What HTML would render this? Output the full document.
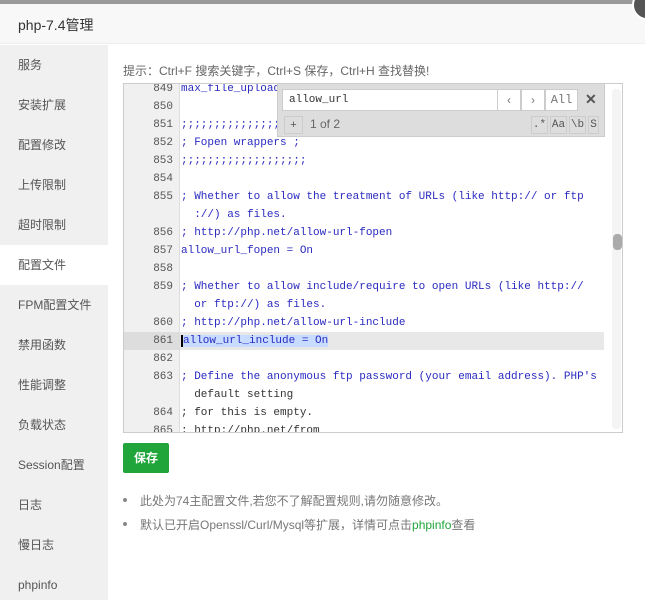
<!DOCTYPE html>
<html><head><meta charset="utf-8"><style>
*{margin:0;padding:0;box-sizing:border-box}
body{width:645px;height:600px;overflow:hidden;background:#fff;font-family:"Liberation Sans","Noto Sans CJK SC",sans-serif;position:relative}
.top{position:absolute;left:0;top:0;width:645px;height:4px;background:#9a9a9a}
.hdr{position:absolute;left:0;top:4px;width:645px;height:40px;background:#f8f8f8;border-bottom:1px solid #eee;font-size:14px;color:#333;padding:11px 0 0 18px}
.close{position:absolute;left:632px;top:-10px;width:30px;height:30px;border-radius:50%;background:#555;border:2px solid #fff}
.side{position:absolute;left:0;top:45px;width:108px;height:555px;background:#f0f0f0}
.side div{height:40px;line-height:40px;padding-left:18px;font-size:12px;color:#555}
.side .on{background:#fff}
.tip{position:absolute;left:123px;top:62px;font-size:12px;color:#666}
.ed{position:absolute;left:123px;top:83px;width:500px;height:350px;border:1px solid #ccc;overflow:hidden;background:#fff}
.gut{position:absolute;left:0;top:0;width:56px;height:100%;background:#f0f0f0;border-right:1px solid #ddd}
.lines{position:absolute;left:0;top:-4px;width:480px;font-family:"Liberation Mono",monospace;font-size:11px;line-height:18px}
.l{position:relative;height:18px;white-space:pre;color:#2a2ac0;padding-left:57px}
.l .n{position:absolute;left:0;width:49px;text-align:right;color:#555}
.l.c{color:#333}
.sel{background:#e8e8e8}
.sel .n{background:#ddd;width:56px;padding-right:7px}
.hl{background:#c8dcff;border-left:2px solid #000}
.sb{position:absolute;left:612px;top:89px;width:9px;height:340px;background:#f4f4f4;border-radius:4px}
.th{position:absolute;left:613px;top:234px;width:9px;height:16px;background:#aaa;border-radius:4px}
.sp{position:absolute;left:277px;top:84px;width:328px;height:53px;background:#ddd;border:1px solid #ccc;border-top:none}
.inp{position:absolute;left:4px;top:5px;width:245px;height:22px;background:#fff;border:1px solid #ccc;font-family:"Liberation Mono",monospace;font-size:11px;padding:4px 6px;color:#333}
.bt{position:absolute;top:5px;height:22px;background:#fff;border:1px solid #ccc;font-size:12px;color:#777;text-align:center;line-height:20px}
.sm{position:absolute;top:32px;height:18px;border:1px solid #ccc;font-size:11px;color:#555;text-align:center;line-height:16px;font-family:"Liberation Mono",monospace}
.save{position:absolute;left:123px;top:443px;width:46px;height:30px;background:#20a53a;border-radius:2px;color:#fff;font-size:12px;font-weight:bold;text-align:center;line-height:30px}
.ul{position:absolute;left:123px;top:492px;font-size:12px;color:#777}
.ul div{height:24px;position:relative;padding-left:17px}
.ul div:before{content:"";position:absolute;left:0;top:6px;width:4px;height:4px;border-radius:50%;background:#888}
</style></head><body>
<div class="top"></div>
<div class="hdr">php-7.4管理</div>
<div class="close"></div>
<div class="side">
<div>服务</div><div>安装扩展</div><div>配置修改</div><div>上传限制</div><div>超时限制</div><div class="on">配置文件</div><div>FPM配置文件</div><div>禁用函数</div><div>性能调整</div><div>负载状态</div><div>Session配置</div><div>日志</div><div>慢日志</div><div>phpinfo</div>
</div>
<div class="tip">提示：Ctrl+F 搜索关键字，Ctrl+S 保存，Ctrl+H 查找替换!</div>
<div class="ed">
<div class="gut"></div>
<div class="lines">
<div class="l"><span class="n">849</span>max_file_uploads = 20</div>
<div class="l"><span class="n">850</span></div>
<div class="l"><span class="n">851</span>;;;;;;;;;;;;;;;;;;;</div>
<div class="l"><span class="n">852</span>; Fopen wrappers ;</div>
<div class="l"><span class="n">853</span>;;;;;;;;;;;;;;;;;;;</div>
<div class="l"><span class="n">854</span></div>
<div class="l"><span class="n">855</span>; Whether to allow the treatment of URLs (like http:// or ftp</div>
<div class="l"><span class="n"></span>  ://) as files.</div>
<div class="l"><span class="n">856</span>; http://php.net/allow-url-fopen</div>
<div class="l"><span class="n">857</span>allow_url_fopen = On</div>
<div class="l"><span class="n">858</span></div>
<div class="l"><span class="n">859</span>; Whether to allow include/require to open URLs (like http://</div>
<div class="l"><span class="n"></span>  or ftp://) as files.</div>
<div class="l"><span class="n">860</span>; http://php.net/allow-url-include</div>
<div class="l sel"><span class="n">861</span><span class="hl">allow_url_include = On</span></div>
<div class="l"><span class="n">862</span></div>
<div class="l"><span class="n">863</span>; Define the anonymous ftp password (your email address). PHP's</div>
<div class="l c"><span class="n"></span>  default setting</div>
<div class="l c"><span class="n">864</span>; for this is empty.</div>
<div class="l c"><span class="n">865</span>; http://php.net/from</div>
</div>
</div>
<div class="sb"></div><div class="th"></div>
<div class="sp">
<div class="inp">allow_url</div>
<div class="bt" style="left:219px;width:24px">‹</div>
<div class="bt" style="left:243px;width:24px">›</div>
<div class="bt" style="left:267px;width:33px;font-family:'Liberation Mono',monospace">All</div>
<div style="position:absolute;left:307px;top:7px;font-size:14px;color:#555;font-weight:bold">✕</div>
<div class="sm" style="left:6px;width:19px;font-family:'Liberation Sans'">+</div>
<div style="position:absolute;left:32px;top:33px;font-size:12px;color:#666">1 of 2</div>
<div class="sm" style="left:253px;width:17px">.*</div>
<div class="sm" style="left:272px;width:17px">Aa</div>
<div class="sm" style="left:291px;width:17px">\b</div>
<div class="sm" style="left:310px;width:11px">S</div>
</div>
<div class="save">保存</div>
<div class="ul">
<div>此处为74主配置文件,若您不了解配置规则,请勿随意修改。</div>
<div>默认已开启Openssl/Curl/Mysql等扩展，详情可点击<span style="color:#20a53a">phpinfo</span>查看</div>
</div>
</body></html>
